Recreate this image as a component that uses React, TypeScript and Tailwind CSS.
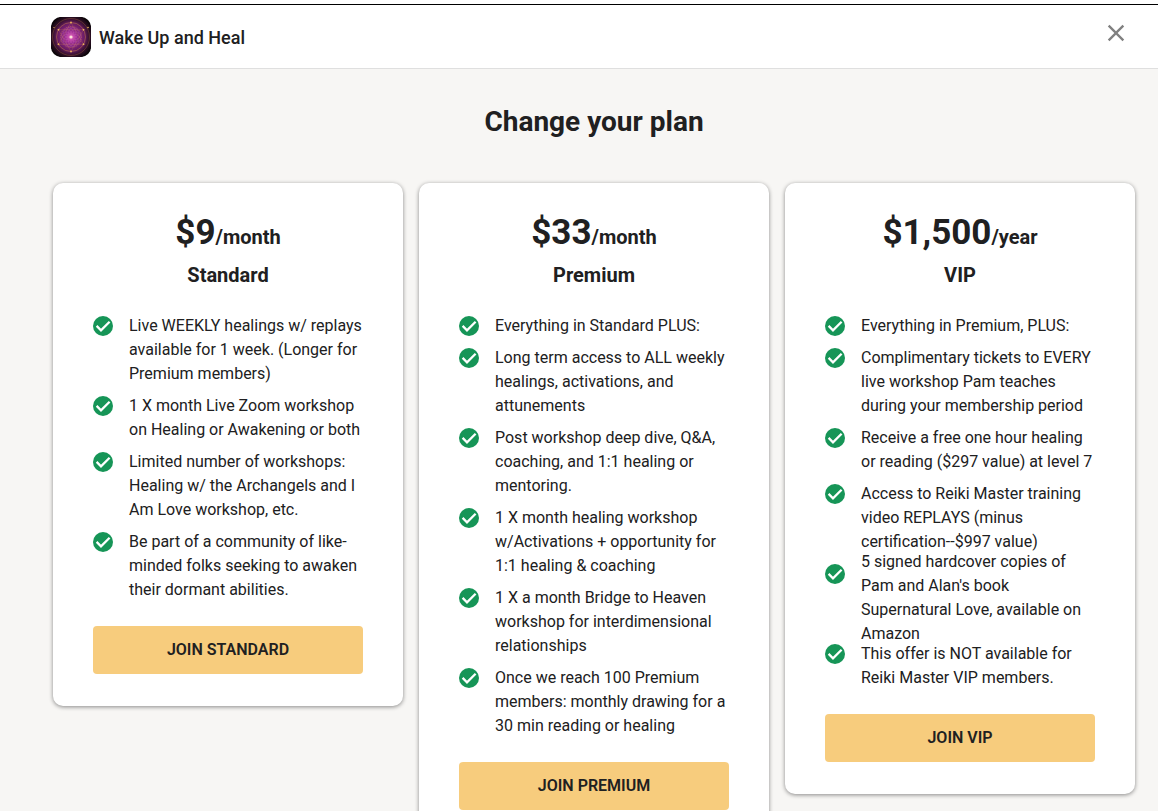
import { MdClose } from 'react-icons/md'

type Plan = {
  name: string
  price: string
  period: string
  perks: string[]
}

const plans: Plan[] = [
  {
    name: 'Standard',
    price: '$9',
    period: 'month',
    perks: [
      'Live WEEKLY healings w/ replays available for 1 week. (Longer for Premium members)',
      '1 X month Live Zoom workshop on Healing or Awakening or both',
      'Limited number of workshops: Healing w/ the Archangels and I Am Love workshop, etc.',
      'Be part of a community of like-minded folks seeking to awaken their dormant abilities.',
    ],
  },
  {
    name: 'Premium',
    price: '$33',
    period: 'month',
    perks: [
      'Everything in Standard PLUS:',
      'Long term access to ALL weekly healings, activations, and attunements',
      'Post workshop deep dive, Q&A, coaching, and 1:1 healing or mentoring.',
      '1 X month healing workshop w/Activations + opportunity for 1:1 healing & coaching',
      '1 X a month Bridge to Heaven workshop for interdimensional relationships',
      'Once we reach 100 Premium members: monthly drawing for a 30 min reading or healing',
    ],
  },
  {
    name: 'VIP',
    price: '$1,500',
    period: 'year',
    perks: [
      'Everything in Premium, PLUS:',
      'Complimentary tickets to EVERY live workshop Pam teaches during your membership period',
      'Receive a free one hour healing or reading ($297 value) at level 7',
      'Access to Reiki Master training video REPLAYS (minus certification--$997 value)',
      "5 signed hardcover copies of Pam and Alan's book Supernatural Love, available on Amazon",
      'This offer is NOT available for Reiki Master VIP members.',
    ],
  },
]

const petals = [0, 30, 60, 90, 120, 150, 180, 210, 240, 270, 300, 330]

function Logo() {
  return (
    <svg viewBox="0 0 40 40" className="h-10 w-10 shrink-0 rounded-[10px]" aria-hidden="true">
      <defs>
        <radialGradient id="glow">
          <stop offset="0" stopColor="#f5b3dc" />
          <stop offset="0.08" stopColor="#c949ac" />
          <stop offset="0.3" stopColor="#932a8c" />
          <stop offset="0.6" stopColor="#681d62" />
          <stop offset="0.8" stopColor="#32102a" />
          <stop offset="1" stopColor="#0b0508" />
        </radialGradient>
      </defs>
      <rect width="40" height="40" fill="#0b0508" />
      <circle cx="20" cy="20" r="23" fill="url(#glow)" />
      <g fill="none" stroke="#d87fc4" strokeWidth="0.4" opacity="0.45">
        {petals.map((a) => (
          <circle key={a} cx="20" cy="15" r="5" transform={`rotate(${a} 20 20)`} />
        ))}
      </g>
      <g fill="none" stroke="#d0854a" strokeWidth="0.6" opacity="0.8">
        <circle cx="20" cy="20" r="14.5" />
        <circle cx="20" cy="20" r="10.5" strokeDasharray="1 1" />
        <circle cx="20" cy="20" r="18.5" opacity="0.6" />
        <path d="M20 5.500 32.500 27.300H7.500zM20 34.500 7.500 12.700h25z" opacity="0.5" />
      </g>
      <g fill="#f0b45c">
        {[0, 60, 120, 180, 240, 300].map((a) => (
          <circle key={a} cx="20" cy="5.500" r="0.9" transform={`rotate(${a} 20 20)`} />
        ))}
        <circle cx="37" cy="10.500" r="0.8" />
        <circle cx="3" cy="10.500" r="0.6" />
      </g>
      <circle cx="20" cy="20" r="1.600" fill="#ffe0d8" />
    </svg>
  )
}

function CheckBadge() {
  return (
    <svg viewBox="0 0 20 20" className="mt-0.5 h-5 w-5 shrink-0 self-start" aria-hidden="true">
      <circle cx="10" cy="10" r="10" fill="#169557" />
      <path d="m3.600 9.900 4.400 4.400 8.600-8.600" fill="none" stroke="#fff" strokeWidth="2.300" />
    </svg>
  )
}

function PlanCard({ plan }: { plan: Plan }) {
  return (
    <section className="rounded-[10px] bg-white px-10 pt-7 pb-8 shadow-[0_1px_4px_rgba(0,0,0,0.45)]">
      <p className="text-center text-[35px] leading-[43px] font-bold">
        {plan.price}
        <span className="text-xl">/{plan.period}</span>
      </p>
      <h2 className="mt-[7px] text-center text-xl leading-7 font-bold">{plan.name}</h2>

      <ul className="mt-[25px] flex flex-col gap-2">
        {plan.perks.map((perk) => (
          <li key={perk} className="flex max-h-[72px] items-center gap-4">
            <CheckBadge />
            <span className="flex-1 text-base leading-6">{perk}</span>
          </li>
        ))}
      </ul>

      <button
        type="button"
        className="mt-6 h-12 w-full cursor-pointer rounded bg-[#f7cc7d] text-base font-semibold uppercase"
      >
        Join {plan.name}
      </button>
    </section>
  )
}

export default function App() {
  return (
    <div className="min-h-screen bg-[#f7f6f4] font-['Roboto',sans-serif] text-[#202021]">
      {/* HEADER */}
      <header className="border-b border-[#dfdfdf] bg-white pt-1">
        <div className="flex items-start justify-between border-t border-black pt-3 pr-7 pb-[11px] pl-[51px]">
          <div className="flex items-center gap-2">
            <Logo />
            <span className="pt-0.5 text-lg font-medium">Wake Up and Heal</span>
          </div>
          <button type="button" aria-label="Close" className="mt-0.5 cursor-pointer text-[#808080]">
            <MdClose size={28} />
          </button>
        </div>
      </header>

      {/* PLANS */}
      <main className="pt-[33px] pr-[23px] pb-10 pl-[53px]">
        <h1 className="text-center text-[28px] leading-10 font-bold">Change your plan</h1>

        <div className="mt-[41px] grid grid-cols-3 items-start gap-4">
          {plans.map((plan) => (
            <PlanCard key={plan.name} plan={plan} />
          ))}
        </div>
      </main>
    </div>
  )
}
